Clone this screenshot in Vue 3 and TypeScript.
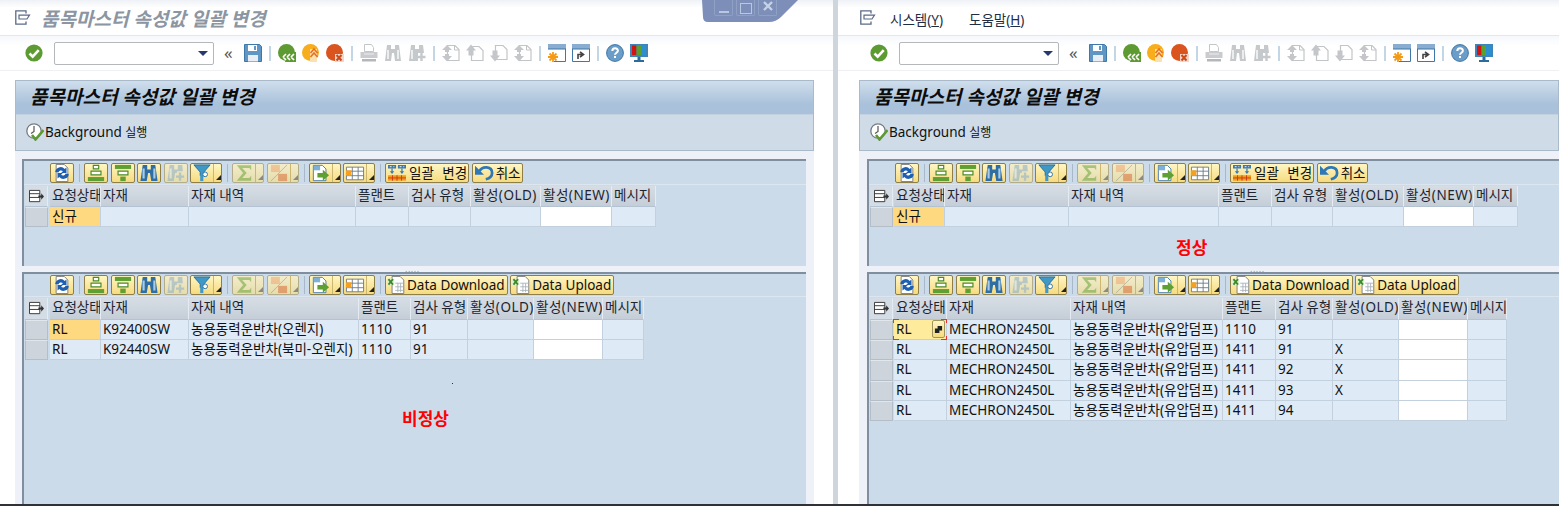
<template>
  <div class="screen">
    <svg class="defs" aria-hidden="true">
      <defs>
        <symbol id="i-ok" viewBox="0 0 18 18"><circle cx="9" cy="9" r="8.6" fill="#5c9a32" /><path d="M4.5 9.5l3.2 3.2 6-6.6" fill="none" stroke="#fff" stroke-width="2.6" /></symbol>
        <symbol id="i-save" viewBox="0 0 18 18"><path d="M.5.5h15l2 2v15H.5z" fill="#5f96c4" stroke="#3f77a8" /><path d="M4 1h9v6H4z" fill="#fff" /><path d="M4 11h10v6.5H4z" fill="#e8eef4" /><path d="M10 2h2v4h-2z" fill="#5f96c4" /></symbol>
        <symbol id="i-back" viewBox="0 0 18 18"><circle cx="8.5" cy="8.5" r="8.5" fill="#5e9a32" /><path d="M9 8h9v10H7z" fill="#5e9a32" /><path d="M9 13l3-3M9 13l3 3M13 13l3-3M13 13l3 3M5 13l3-3M5 13l3 3" stroke="#fff" stroke-width="1.7" /></symbol>
        <symbol id="i-exit" viewBox="0 0 18 18"><circle cx="8.5" cy="8.5" r="8.5" fill="#f7ad1c" /><path d="M8 5h7v13H8z" fill="#fbe1b0" /><path d="M8.5 9l3.5-4 3.5 4M8.5 13l3.5-4 3.5 4" fill="none" stroke="#e8721c" stroke-width="1.6" /></symbol>
        <symbol id="i-cancel" viewBox="0 0 18 18"><circle cx="8.5" cy="8.5" r="8.5" fill="#d9541e" /><path d="M9 10h9v8H9z" fill="#f2d6c8" /><path d="M10.5 11l5 5.5M15.5 11l-5 5.5" stroke="#cc4a1a" stroke-width="2" /></symbol>
        <symbol id="i-print" viewBox="0 0 18 18"><path d="M4.500 .5h7l2 3v4h-9z" fill="#fff" stroke="#c4c7ca" /><path d="M.5 8h17v6H.5z" fill="#c9cbce" /><path d="M2 15h14v2.500H2z" fill="#b4b7ba" /><path d="M4 10h10" stroke="#eceded" /></symbol>
        <symbol id="i-find" viewBox="0 0 18 18"><path d="M3 1h4v4h4V1h4l2 16h-6l-1-8H8l-1 8H1z" fill="#c6c9cc" /><path d="M4 6v9M14 6v9" stroke="#eceded" stroke-width="2" /></symbol>
        <symbol id="i-findnext" viewBox="0 0 18 18"><path d="M3 1h4v4h4V1h4l1 8H10v8H1z" fill="#c6c9cc" /><path d="M4 6v9" stroke="#eceded" stroke-width="2" /><path d="M13.500 9v8M9.500 13h8" stroke="#c6c9cc" stroke-width="2.400" /></symbol>
        <symbol id="i-first" viewBox="0 0 18 18"><path d="M5.500 1.500h7.500l4 4v11H5.500z" fill="#fff" stroke="#c2c5c8" stroke-width="1.200" /><path d="M12.500 1.500v4.500H17" fill="none" stroke="#c2c5c8" /><path d="M0 6l5-5 5 5H7v2H3V6zM0 12l5 5.500 5-5.500H7v-2H3v2z" fill="#c4c6c9" /></symbol>
        <symbol id="i-prev" viewBox="0 0 18 18"><path d="M5.500 2.500h7.500l4 4v10H5.500z" fill="#fff" stroke="#c2c5c8" stroke-width="1.200" /><path d="M0 6.500l5-6 5 6H7.500v5h-5v-5z" fill="#c4c6c9" /></symbol>
        <symbol id="i-next" viewBox="0 0 18 18"><path d="M5.500 1.500h7.500l4 4v10H5.500z" fill="#fff" stroke="#c2c5c8" stroke-width="1.200" /><path d="M0 11.500l5 6 5-6H7.500v-5h-5v5z" fill="#c4c6c9" /></symbol>
        <symbol id="i-new" viewBox="0 0 18 18"><path d="M.500 .500h17v17H6" fill="#fff" stroke="#3f77a8" /><path d="M0 0h18v5H0z" fill="#88add0" /><path d="M0 5h18" stroke="#3f77a8" /><path d="M5 8v10M0 13h10M1.500 9.500l7 7M8.500 9.500l-7 7" stroke="#f59a14" stroke-width="1.800" /></symbol>
        <symbol id="i-link" viewBox="0 0 18 18"><path d="M.500 .500h17v17H.500z" fill="#fff" stroke="#3f77a8" /><path d="M0 0h18v5H0z" fill="#88add0" /><path d="M0 5h18" stroke="#3f77a8" /><path d="M6 15v-4.500h4M8 8l3.500 2.500L8 13" fill="none" stroke="#444" stroke-width="1.600" /></symbol>
        <symbol id="i-help" viewBox="0 0 18 18"><circle cx="9" cy="9" r="8.400" fill="#6a9dc8" stroke="#3f77a8" stroke-width="1" /><path d="M6.300 7c0-3.600 5.600-3.600 5.600-.3 0 2-2.900 2-2.900 4.100" fill="none" stroke="#fff" stroke-width="2" /><path d="M8 12h2v2H8z" fill="#fff" /></symbol>
        <symbol id="i-monitor" viewBox="0 0 18 18"><path d="M0 0h18v13H0z" fill="#3f85b8" /><path d="M2 1.500h4.500v9.500H2z" fill="#d21414" /><path d="M6.500 1.500h4.500v9.500H6.500z" fill="#5aa02c" /><path d="M11 1.500h5v9.500h-5z" fill="#2c8fd0" /><path d="M7.500 13h3v3h-3zM4 16h10v2H4z" fill="#2b6c9c" /></symbol>
        <symbol id="i-session" viewBox="0 0 16 16"><path d="M11 3.500V.800H.800v13.400H11v-2.700" fill="none" stroke="#5a6b88" stroke-width="1.300" /><path d="M4 5.200h10.500L12 9H4z" fill="#fff" stroke="#5a6b88" stroke-width="1.200" /></symbol>
        <symbol id="i-bgrun" viewBox="0 0 18 18"><circle cx="8" cy="8" r="7.200" fill="#fff" stroke="#757d85" stroke-width="1.300" /><path d="M8 3v5.500l-3 2" fill="none" stroke="#555" stroke-width="1.200" /><path d="M6 12l3.500 4.500L17.500 7" fill="none" stroke="#5c9a32" stroke-width="2.600" /></symbol>
        <symbol id="i-refresh" viewBox="0 0 20 20"><path d="M3.500 .5h9l4 4v15h-13z" fill="#fff" stroke="#777" /><path d="M2.500 9a6 6 0 0 1 10.500-3.500L15 4v6H9l2-2a3 3 0 0 0-5 1.500z" fill="#1f5fb0" /><path d="M17.500 11a6 6 0 0 1-10.500 3.500L5 16v-6h6l-2 2a3 3 0 0 0 5-1.500z" fill="#1f5fb0" /></symbol>
        <symbol id="i-sortup" viewBox="0 0 20 20"><path d="M7 1.500h6v4H7z" fill="#fff" stroke="#4a8a2a" stroke-width="1.300" /><path d="M4.500 8h11v4h-11z" fill="#fff" stroke="#4a8a2a" stroke-width="1.300" /><path d="M1 14.500h18V19H1z" fill="#5ea032" /></symbol>
        <symbol id="i-sortdown" viewBox="0 0 20 20"><path d="M1 1h18v4.500H1z" fill="#5ea032" /><path d="M4.500 8h11v4h-11z" fill="#fff" stroke="#4a8a2a" stroke-width="1.300" /><path d="M7 14h6v5H7z" fill="#5ea032" /></symbol>
        <symbol id="i-binoc" viewBox="0 0 20 20"><path d="M3 1h5v5h4V1h5l2.500 18h-7L11 10H9l-1.500 9h-7z" fill="#2f6ea5" /><path d="M4 5v11M16 5v11" stroke="#a9cbe6" stroke-width="2.400" /></symbol>
        <symbol id="i-binocplus" viewBox="0 0 20 20"><path d="M3 1h5v5h4V1h5l.5 7H11v2H9l-1.500 9h-7z" fill="#84a9c8" /><path d="M4 5v11" stroke="#d8e6f0" stroke-width="2.400" /><path d="M14.500 9.500v9M10 14h9" stroke="#84a9c8" stroke-width="2.600" /></symbol>
        <symbol id="i-filter" viewBox="0 0 20 20"><path d="M1 1h18l-7 8v4H8V9z" fill="#3f98c8" stroke="#1f6da0" /><path d="M8 12h3.500v7H8z" fill="#3f98c8" /><circle cx="13.500" cy="11.500" r="2.600" fill="#fff" stroke="#1f6da0" /></symbol>
        <symbol id="i-sum" viewBox="0 0 20 20"><path d="M2 1.500h16V7l-2-2.500H8l5 5.500-5 5.500h8l2-2.500v5.500H2l7-8.500z" fill="#5ea032" /></symbol>
        <symbol id="i-subtotal" viewBox="0 0 20 20"><path d="M1 1h10v8H1z" fill="#f0a26a" /><path d="M9 11h10v8H9z" fill="#d9622c" /><path d="M19 1L1 19" stroke="#888" /></symbol>
        <symbol id="i-export" viewBox="0 0 20 20"><path d="M1.500 1.500h10l4 4v13h-14z" fill="#fff" stroke="#3f77a8" /><path d="M2 2h7v5H2z" fill="#7fb0d8" /><path d="M6 10h6V6.500l7 6-7 6V15H6z" fill="#5ea032" /></symbol>
        <symbol id="i-layout" viewBox="0 0 20 20"><path d="M.5 3.500h19v14H.5z" fill="#fff" stroke="#6a7a8a" /><path d="M7 3.500v14M13.500 3.500v14M.5 8h19M.5 13h19" stroke="#6a7a8a" /><path d="M0 7h6v6H0z" fill="#f5a01e" /></symbol>
        <symbol id="i-mass" viewBox="0 0 20 20"><path d="M0 1h9v4H0zM11 1h9v4h-9z" fill="#3d7ab0" /><path d="M2 3h2M6 3h1M13 3h2M17 3h1" stroke="#fff" /><path d="M4.500 5v5M15.500 5v5" stroke="#3d7ab0" stroke-width="1.400" /><path d="M2 8l2.500 3L7 8zM13 8l2.500 3L18 8z" fill="#3d7ab0" /><path d="M0 12.500h20v6H0z" fill="#f29a1c" /><path d="M0 15.500h20M5 12.500v6M10 12.500v6M15 12.500v6" stroke="#c8381c" /></symbol>
        <symbol id="i-undo" viewBox="0 0 22 20"><path d="M6 8c3-6 14-6 14 2 0 4-3 6-7 7" fill="none" stroke="#2f78b8" stroke-width="3" /><path d="M1 2v10h10z" fill="#2f78b8" /></symbol>
        <symbol id="i-xls" viewBox="0 0 22 20"><path d="M5.500 .500h9l4 4v15h-13z" fill="#fff" stroke="#777" /><path d="M9 8h9M9 12h9M9 16h9M12 8v10M15 8v10" stroke="#aab2ba" /><path d="M0 3h8v7H0z" fill="#dfeed0" /><path d="M1.500 3.500l5 6M6.500 3.500l-5 6" stroke="#3d8a2a" stroke-width="2" /></symbol>
        <symbol id="i-cols" viewBox="0 0 16 16"><path d="M.5 1.500h11v12H.5z" fill="#fff" stroke="#333" /><path d="M.5 5h11M.5 9h11" stroke="#333" /><path d="M10 7h3V4.500L16 8l-3 3.500V9h-3z" fill="#333" /></symbol>
      </defs>
    </svg>

    <section v-for="pane in panes" :key="pane.id" class="pane" :class="`pane--${pane.id}`">
      <header class="topbar">
        <svg class="session"><use href="#i-session" /></svg>
        <template v-if="pane.id === 'right'">
          <span class="menu">시스템(<u>Y</u>)</span>
          <span class="menu">도움말(<u>H</u>)</span>
        </template>
        <span v-else class="window-title">품목마스터 속성값 일괄 변경</span>
      </header>

      <nav class="systools">
        <svg class="sysicon"><use href="#i-ok" /></svg>
        <div class="cmdfield"><i class="cmdarrow" /></div>
        <span class="chev">«</span>
        <template v-for="(item, i) in sysTools" :key="i">
          <i v-if="item === '|'" class="syssep" />
          <svg v-else class="sysicon"><use :href="`#i-${item}`" /></svg>
        </template>
      </nav>

      <main class="content">
        <div class="titlebox">
          <h1 class="page-title">품목마스터 속성값 일괄 변경</h1>
          <div class="actions">
            <svg class="bgicon"><use href="#i-bgrun" /></svg>
            <span>Background <em>실행</em></span>
          </div>
        </div>

        <div v-for="grid in pane.grids" :key="grid.kind" class="gridbox" :class="`gridbox--${grid.kind}`">
          <div class="alvbar">
            <template v-for="(tool, i) in alvTools" :key="i">
              <i v-if="tool.icon === '|'" class="alvsep" />
              <button v-else class="alvbtn" :class="{ 'is-off': tool.off, 'has-menu': tool.menu }">
                <span class="alvbtn__face"><svg class="alvicon"><use :href="`#i-${tool.icon}`" /></svg></span>
                <span v-if="tool.menu" class="alvbtn__menu"><i /></span>
              </button>
            </template>
            <button v-for="b in grid.buttons" :key="b.label" class="alvbtn alvbtn--text">
              <svg class="alvicon"><use :href="`#i-${b.icon}`" /></svg>{{ b.label }}
            </button>
          </div>

          <div class="alvgrid" :style="{ gridTemplateColumns: gridCols(grid.cols) }">
            <div class="corner"><svg class="cornericon"><use href="#i-cols" /></svg></div>
            <div v-for="h in headers" :key="h" class="th" :class="{ 'th--latin': h.includes('(') }">{{ h }}</div>
            <template v-for="(row, r) in grid.rows" :key="r">
              <div class="rowmark" />
              <div
                v-for="(val, c) in row"
                :key="c"
                class="td"
                :class="{ 'td--input': c === 6, 'td--status': c === 0 && r === 0 && grid.highlight === 'status', 'td--focus': c === 0 && r === 0 && grid.highlight === 'focus' }"
              >
                {{ val }}
                <template v-if="c === 0 && r === 0 && grid.highlight === 'focus'">
                  <span class="f4"><svg viewBox="0 0 10 10" class="f4icon"><path d="M1 4h5v5H1zM4 1h5v5H6V4H4z" fill="#222" /></svg></span>
                  <i class="tick tick--tl" /><i class="tick tick--tr" /><i class="tick tick--bl" /><i class="tick tick--br" />
                </template>
              </div>
            </template>
          </div>

          <strong v-if="grid.note" class="note" :class="`note--${pane.id}`">{{ grid.note }}</strong>
          <i v-if="grid.note === '비정상'" class="speck" />
        </div>
      </main>
    </section>

    <div class="winctl">
      <svg viewBox="0 0 96 23" class="winctl__bg"><path d="M0 0h96L79 17q-5 5-12 5H6q-5 0-5-5z" fill="#7d8fb8" /></svg>
      <span class="winctl__btn"><i class="g-min" /></span>
      <span class="winctl__btn"><i class="g-max" /></span>
      <span class="winctl__btn"><svg viewBox="0 0 10 10" class="g-x"><path d="M1 1l8 8M9 1l-8 8" stroke="#c6d2e8" stroke-width="2.400" /></svg></span>
    </div>
  </div>
</template>

<script setup lang="ts">
type Tool = { icon: string; off?: boolean; menu?: boolean }
type Grid = {
  kind: 'edit' | 'list'
  cols: number[]
  rows: string[][]
  buttons: { icon: string; label: string }[]
  highlight: 'status' | 'focus'
  note?: string
}

const headers = ['요청상태', '자재', '자재 내역', '플랜트', '검사 유형', '활성(OLD)', '활성(NEW)', '메시지']

const sysTools = [
  'save', '|', 'back', 'exit', 'cancel', '|', 'print', 'find', 'findnext', '|',
  'first', 'prev', 'next', 'first', '|', 'new', 'link', '|', 'help', 'monitor',
]

const alvTools: Tool[] = [
  { icon: 'refresh' },
  { icon: '|' },
  { icon: 'sortup' },
  { icon: 'sortdown' },
  { icon: 'binoc' },
  { icon: 'binocplus', off: true },
  { icon: 'filter', menu: true },
  { icon: '|' },
  { icon: 'sum', off: true, menu: true },
  { icon: 'subtotal', off: true, menu: true },
  { icon: '|' },
  { icon: 'export', menu: true },
  { icon: 'layout', menu: true },
  { icon: '|' },
]

const editButtons = [
  { icon: 'mass', label: '일괄 변경' },
  { icon: 'undo', label: '취소' },
]
const listButtons = [
  { icon: 'xls', label: 'Data Download' },
  { icon: 'xls', label: 'Data Upload' },
]

const newRow = ['신규', '', '', '', '', '', '', '']
const rlRow = (mat: string, desc: string, plant: string, type: string, old = '') =>
  ['RL', mat, desc, plant, type, old, '', '']
const mech = '농용동력운반차(유압덤프)'

// first value is the row marker column
const panes: { id: string; grids: Grid[] }[] = [
  {
    id: 'left',
    grids: [
      { kind: 'edit', cols: [25, 51, 88, 167, 53, 62, 70, 71, 44], rows: [newRow], buttons: editButtons, highlight: 'status' },
      {
        kind: 'list',
        cols: [25, 51, 88, 170, 52, 57, 66, 69, 41],
        rows: [
          rlRow('K92400SW', '농용동력운반차(오렌지)', '1110', '91'),
          rlRow('K92440SW', '농용동력운반차(북미-오렌지)', '1110', '91'),
        ],
        buttons: listButtons,
        highlight: 'status',
        note: '비정상',
      },
    ],
  },
  {
    id: 'right',
    grids: [
      { kind: 'edit', cols: [24, 51, 124, 150, 53, 61, 71, 70, 44], rows: [newRow], buttons: editButtons, highlight: 'status', note: '정상' },
      {
        kind: 'list',
        cols: [24, 53, 124, 152, 53, 57, 66, 69, 39],
        rows: [
          rlRow('MECHRON2450L', mech, '1110', '91'),
          rlRow('MECHRON2450L', mech, '1411', '91', 'X'),
          rlRow('MECHRON2450L', mech, '1411', '92', 'X'),
          rlRow('MECHRON2450L', mech, '1411', '93', 'X'),
          rlRow('MECHRON2450L', mech, '1411', '94'),
        ],
        buttons: listButtons,
        highlight: 'focus',
      },
    ],
  },
]

function gridCols(cols: number[]) {
  return cols.map((w) => `${w}px`).join(' ')
}
</script>

<style>
html,
body {
  margin: 0;
  background: #fff;
  overflow: hidden;
}
</style>

<style scoped>
.screen {
  position: relative;
  display: flex;
  width: 1559px;
  height: 506px;
  overflow: hidden;
  box-sizing: border-box;
  border-bottom: 2px solid #2d3238;
  font-family: "Noto Sans", "Noto Sans CJK KR", sans-serif;
  font-size: 13px;
  color: #111;
  background: #fff;
}

.defs {
  position: absolute;
  width: 0;
  height: 0;
}

.pane {
  display: flex;
  flex-direction: column;
  box-sizing: border-box;
  min-width: 0;
}

.pane--left {
  width: 838px;
  flex: none;
  border-right: 5px solid #cfd5dc;
}

.pane--right {
  flex: 1;
}

.topbar {
  display: flex;
  align-items: center;
  height: 36px;
  box-sizing: border-box;
  padding: 0 0 0 15px;
  background: linear-gradient(#eef1f6, #fff 22%);
  border-bottom: 1px solid #e3e7ed;
}

.pane--right .topbar {
  padding-left: 22px;
}

.session {
  width: 16px;
  height: 16px;
  flex: none;
}

.window-title {
  margin-left: 10px;
  font-size: 19px;
  font-weight: 700;
  font-style: italic;
  color: #8c95a2;
}

.menu {
  margin: 3px 0 0 14px;
  font-size: 13.500px;
  color: #1e2c44;
}

.menu + .menu {
  margin-left: 26px;
}

.systools {
  display: flex;
  align-items: center;
  gap: 6px;
  height: 35px;
  box-sizing: border-box;
  padding: 0 0 0 25px;
  background: linear-gradient(#f6f8fb, #fff 30%);
  border-bottom: 1px solid #eef0f4;
}

.pane--right .systools {
  padding-left: 32px;
}

.sysicon {
  width: 18px;
  height: 18px;
  flex: none;
}

.cmdfield {
  position: relative;
  width: 160px;
  height: 23px;
  margin-left: 5px;
  box-sizing: border-box;
  border: 1px solid #b4b7bb;
  border-radius: 2px;
  background: #fff;
}

.cmdarrow {
  position: absolute;
  right: 5px;
  top: 8px;
  border: 5px solid transparent;
  border-top: 5px solid #27386e;
  border-bottom: 0;
}

.chev {
  width: 14px;
  margin-left: 4px;
  font-size: 17px;
  line-height: 18px;
  color: #555;
}

.syssep {
  width: 2px;
  height: 15px;
  margin: 0 1px;
  background: #c3d6e6;
}

.content {
  flex: 1;
  min-height: 0;
  display: flex;
  flex-direction: column;
  margin: 9px 19px 0 15px;
  background: #eef2f8;
}

.pane--right .content {
  margin: 9px 0 0 21px;
}

.titlebox {
  border: 1px solid #a9bacb;
  background: #cfdce8;
}

.page-title {
  height: 34px;
  margin: 0;
  box-sizing: border-box;
  padding-left: 14px;
  border-bottom: 1px solid #c3d2e1;
  background: linear-gradient(#cfdeec, #a9c1da 70%);
  font-size: 19px;
  font-weight: 700;
  font-style: italic;
  line-height: 32px;
  color: #0c0c0c;
}

.actions {
  display: flex;
  align-items: center;
  height: 35px;
  box-sizing: border-box;
  padding: 0 0 2px 10px;
  font-size: 13.500px;
}

.actions em {
  font-style: normal;
  font-size: 12px;
}

.bgicon {
  width: 18px;
  height: 18px;
  flex: none;
  margin-right: 1px;
}

.gridbox {
  position: relative;
  margin: 8px 8px 0 7px;
  box-sizing: border-box;
  border-top: 2px solid #7f8fa0;
  border-left: 2px solid #7f8fa0;
  background: #ccdbea;
}

.pane--right .gridbox {
  margin: 8px 0 0 8px;
}

.gridbox--edit {
  height: 107px;
  flex: none;
}

.gridbox--list,
.pane--right .gridbox--list {
  flex: 1;
  margin-top: 6px;
}

.gridbox--edit::after {
  content: ".....";
  position: absolute;
  left: 381px;
  bottom: -6px;
  font-size: 9px;
  line-height: 6px;
  letter-spacing: .5px;
  color: #8a97a5;
}

.alvbar {
  display: flex;
  align-items: flex-start;
  gap: 2.500px;
  height: 24px;
  box-sizing: border-box;
  padding: 2px 0 0 26px;
  border-bottom: 1px solid #dbe6f0;
}

.gridbox--list .alvbar {
  height: 23px;
  padding-top: 1px;
}

.alvsep {
  width: 1px;
  height: 18px;
  margin: 1px 1.500px 1px 2.500px;
  background: #a8b8c8;
}

.alvbtn {
  display: flex;
  align-items: center;
  height: 20px;
  padding: 0;
  box-sizing: border-box;
  border: 1px solid #8e7f48;
  border-radius: 2px;
  background: linear-gradient(#fff6c4, #f6da7e);
  font: inherit;
  font-size: 13.500px;
  line-height: 18px;
  color: #111;
}

.alvbtn.is-off {
  border-color: #b3ad8c;
  background: linear-gradient(#f2ecca, #e6ddac);
}

.alvbtn.is-off .alvicon {
  opacity: .5;
}

.alvbtn__face {
  display: flex;
  align-items: center;
  justify-content: center;
  width: 22px;
  height: 18px;
}

.alvbtn__menu {
  position: relative;
  width: 8px;
  height: 18px;
  box-sizing: border-box;
  border-left: 1px solid #cbb772;
}

.alvbtn__menu i {
  position: absolute;
  right: 0;
  bottom: 2px;
  border-left: 5px solid transparent;
  border-bottom: 5px solid #222;
}

.is-off .alvbtn__menu i {
  border-bottom-color: #8a8a80;
}

.alvicon {
  width: 20px;
  height: 18px;
  flex: none;
}

.alvbtn--text {
  padding: 0 2px 0 1px;
  white-space: nowrap;
}

.gridbox--edit .alvbtn--text {
  padding-right: 1px;
  word-spacing: 5px;
}

.gridbox--edit .alvbtn--text .alvicon {
  margin-right: 2px;
}

.alvgrid {
  display: grid;
  width: max-content;
  margin-left: 1px;
  padding-top: 1px;
}

.corner,
.th {
  height: 21px;
  box-sizing: border-box;
  background: linear-gradient(#d6dde4, #c5ced8);
  border-right: 1px solid #e4ebf2;
  border-bottom: 1px solid #b4c3d2;
}

.gridbox--list .corner,
.gridbox--list .th {
  height: 22px;
}

.corner {
  display: flex;
  align-items: center;
  justify-content: center;
  width: 23px;
  background: #d4dde6;
}

.cornericon {
  width: 15px;
  height: 15px;
}

.th {
  padding-left: 2px;
  font-size: 13.500px;
  line-height: 19px;
  white-space: nowrap;
  overflow: hidden;
  color: #1d2530;
}

.th--latin {
  letter-spacing: .5px;
}

.rowmark {
  width: 23px;
  height: 20.200px;
  box-sizing: border-box;
  background: #cdd4db;
  border: 1px solid #b3bec9;
  border-top-color: #e1e6eb;
}

.td {
  position: relative;
  height: 20.200px;
  box-sizing: border-box;
  padding-left: 2px;
  border-right: 1px solid #c3d1df;
  border-bottom: 1px solid #c3d1df;
  background: #deeaf5;
  font-size: 13.500px;
  line-height: 19px;
  white-space: nowrap;
  color: #111;
}

.td--input {
  background: #fff;
}

.td--status {
  background: #ffd980;
}

.td--focus {
  background: #ffeb9c;
}

.f4 {
  position: absolute;
  right: 1px;
  top: 0;
  display: flex;
  align-items: center;
  justify-content: center;
  width: 13px;
  height: 18px;
  box-sizing: border-box;
  border: 1px solid #a2955c;
  border-radius: 2px;
  background: linear-gradient(#fff6c4, #f6da7e);
}

.f4icon {
  width: 9px;
  height: 9px;
}

.tick {
  position: absolute;
  width: 5px;
  height: 3px;
  border: 0 solid #e8303a;
}

.tick--tl { left: -1px; top: -1px; border-width: 1px 0 0 1px; }
.tick--tr { right: -1px; top: -1px; border-width: 1px 1px 0 0; }
.tick--bl { left: -1px; bottom: -1px; border-width: 0 0 1px 1px; }
.tick--br { right: -1px; bottom: -1px; border-width: 0 1px 1px 0; }

.note {
  position: absolute;
  font-size: 17px;
  line-height: 20px;
  color: #f00;
}

.note--left {
  left: 378px;
  top: 135px;
}

.note--right {
  left: 307px;
  top: 77px;
}

.speck {
  position: absolute;
  left: 428px;
  top: 109px;
  width: 1px;
  height: 1px;
  background: #333;
}

.winctl {
  position: absolute;
  left: 702px;
  top: 0;
  display: flex;
  gap: 3px;
  width: 96px;
  height: 23px;
  padding: 0 0 0 12px;
  box-sizing: border-box;
}

.winctl__bg {
  position: absolute;
  inset: 0;
  width: 96px;
  height: 23px;
}

.winctl__btn {
  position: relative;
  display: flex;
  align-items: center;
  justify-content: center;
  width: 17px;
  height: 15px;
  border: 1px solid #8ea0c4;
  border-top: 0;
  border-radius: 0 0 2px 2px;
}

.g-min {
  width: 10px;
  height: 2px;
  margin-top: 8px;
  background: #b9c7e0;
}

.g-max {
  width: 10px;
  height: 9px;
  margin-top: 1px;
  border: 1px solid #b9c7e0;
}

.g-x {
  width: 10px;
  height: 10px;
  margin-top: -3px;
}
</style>
